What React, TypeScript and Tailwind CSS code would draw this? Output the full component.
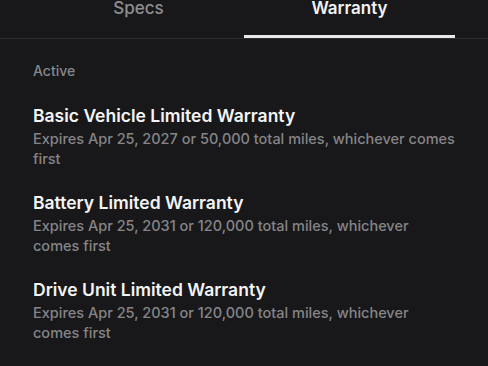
import React from "react";

const items = [
  { title: "Basic Vehicle Limited Warranty", sub: "Expires Apr 25, 2027 or 50,000 total miles, whichever comes first" },
  { title: "Battery Limited Warranty", sub: "Expires Apr 25, 2031 or 120,000 total miles, whichever comes first" },
  { title: "Drive Unit Limited Warranty", sub: "Expires Apr 25, 2031 or 120,000 total miles, whichever comes first" },
];

export default function App() {
  return (
    <div className="w-[488px] h-[366px] overflow-hidden bg-[#18181a]" style={{ fontFamily: "Inter, 'Noto Sans', sans-serif" }}>
      <div className="-mt-[2px] border-b border-[#2e2e30] px-[33px] grid grid-cols-2">
        <div className="text-center text-[17px] leading-[20px] font-medium text-[#8e8e92] pb-[20px]">Specs</div>
        <div className="text-center text-[17px] leading-[20px] font-semibold text-[#f2f2f2] pb-[17px] border-b-[3px] border-[#e8e8e8]">Warranty</div>
      </div>
      <div className="px-[33px] pt-[22px]">
        <div className="text-[14px] leading-[20px] font-medium text-[#87878a]">Active</div>
        <div className="flex flex-col gap-[23px] mt-[24px]">
          {items.map((it) => (
            <div key={it.title} className="flex flex-col">
              <div className="text-[17.5px] leading-[22px] font-semibold text-[#f4f4f4]">{it.title}</div>
              <div className="mt-[2px] text-[14.5px] leading-[20px] font-medium text-[#858588]">{it.sub}</div>
            </div>
          ))}
        </div>
      </div>
    </div>
  );
}
